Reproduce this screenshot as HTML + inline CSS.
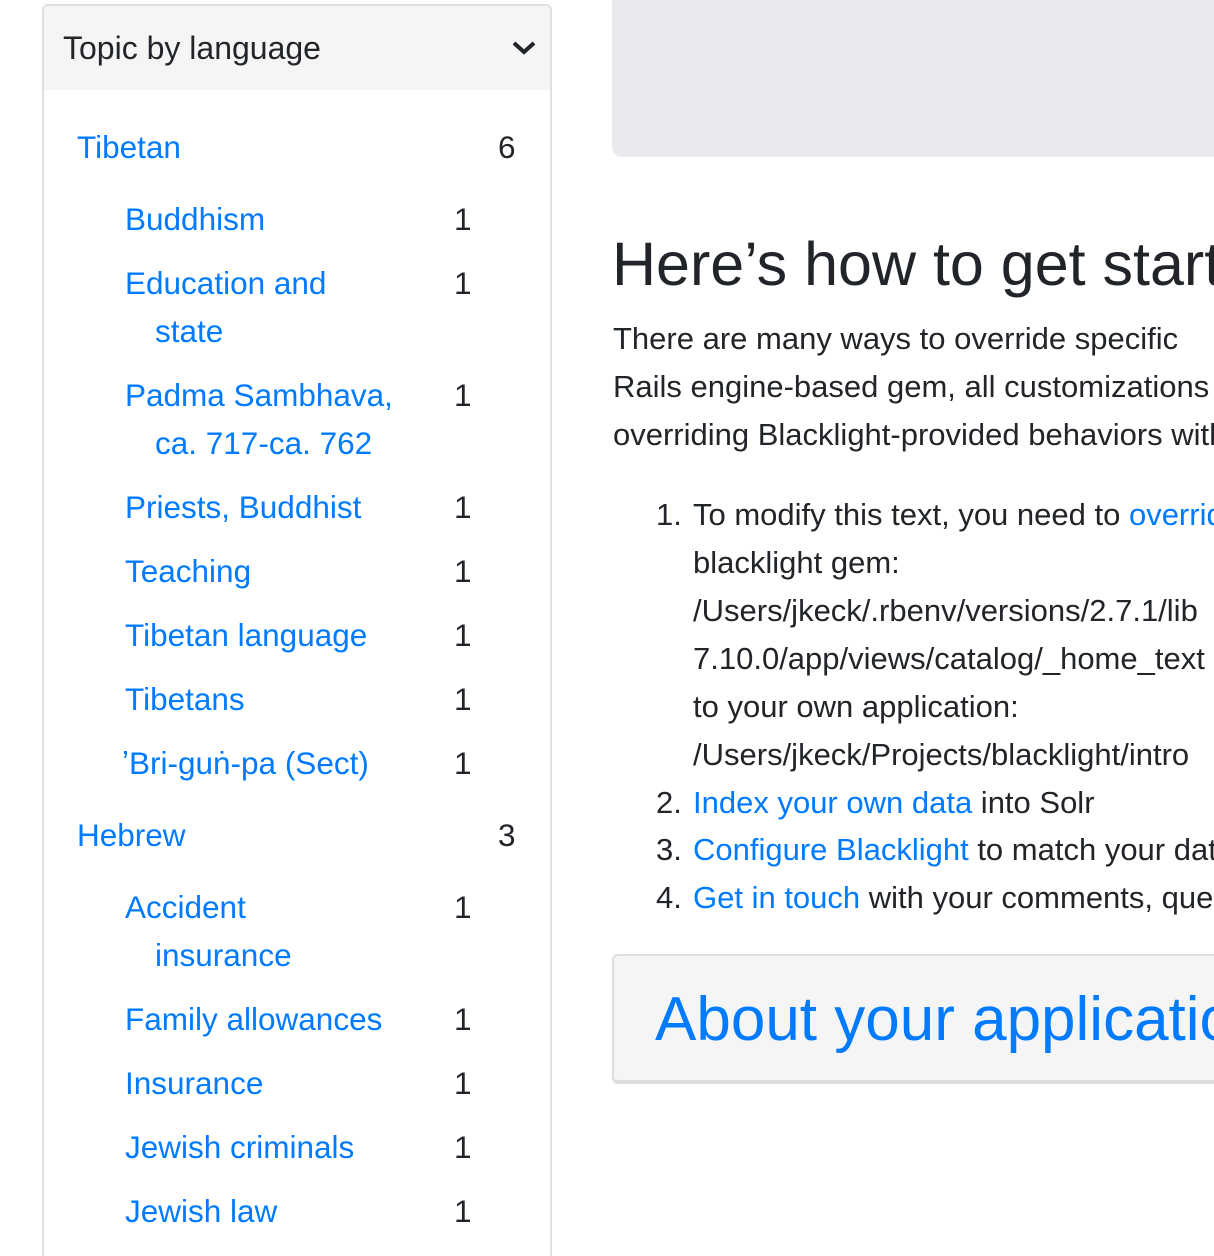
<!DOCTYPE html>
<html><head><meta charset="utf-8"><style>
html,body{margin:0;padding:0;width:1214px;height:1256px;overflow:hidden;background:#fff;font-family:"Liberation Sans",Arial,sans-serif;color:#212529}
#w{position:absolute;left:0;top:0;width:1214px;height:1256px;overflow:hidden}
.a{position:absolute;white-space:nowrap;line-height:48px}
.l{color:#007bff;font-size:31.5px}
.n{font-size:31.5px;color:#212529}
.t{font-size:31px}
</style></head><body><div id="w">
<div style="position:absolute;left:42px;top:4px;width:506px;height:1260px;border:2px solid #dfdfdf;border-bottom:none;border-radius:6px 6px 0 0"></div>
<div style="position:absolute;left:44px;top:6px;width:506px;height:84px;background:#f5f5f5;border-radius:4px 4px 0 0"></div>
<div class="a" style="left:63px;top:24px;font-size:32px;color:#212529">Topic by language</div>
<svg style="position:absolute;left:512px;top:40px" width="24" height="16" viewBox="0 0 24 16"><path d="M2 3 L12 12 L22 3" fill="none" stroke="#212529" stroke-width="4"/></svg>

<div class="a l" style="left:77px;top:123px">Tibetan</div><div class="a n" style="left:498px;top:123px">6</div>
<div class="a l" style="left:125px;top:195px">Buddhism</div><div class="a n" style="left:454px;top:195px">1</div>
<div class="a l" style="left:125px;top:259px">Education and</div><div class="a n" style="left:454px;top:259px">1</div>
<div class="a l" style="left:155px;top:307px">state</div>
<div class="a l" style="left:125px;top:371px">Padma Sambhava,</div><div class="a n" style="left:454px;top:371px">1</div>
<div class="a l" style="left:155px;top:419px">ca. 717-ca. 762</div>
<div class="a l" style="left:125px;top:483px">Priests, Buddhist</div><div class="a n" style="left:454px;top:483px">1</div>
<div class="a l" style="left:125px;top:547px">Teaching</div><div class="a n" style="left:454px;top:547px">1</div>
<div class="a l" style="left:125px;top:611px">Tibetan language</div><div class="a n" style="left:454px;top:611px">1</div>
<div class="a l" style="left:125px;top:675px">Tibetans</div><div class="a n" style="left:454px;top:675px">1</div>
<div class="a l" style="left:122px;top:739px">ʼBri-guṅ-pa (Sect)</div><div class="a n" style="left:454px;top:739px">1</div>
<div class="a l" style="left:77px;top:811px">Hebrew</div><div class="a n" style="left:498px;top:811px">3</div>
<div class="a l" style="left:125px;top:883px">Accident</div><div class="a n" style="left:454px;top:883px">1</div>
<div class="a l" style="left:155px;top:931px">insurance</div>
<div class="a l" style="left:125px;top:995px">Family allowances</div><div class="a n" style="left:454px;top:995px">1</div>
<div class="a l" style="left:125px;top:1059px">Insurance</div><div class="a n" style="left:454px;top:1059px">1</div>
<div class="a l" style="left:125px;top:1123px">Jewish criminals</div><div class="a n" style="left:454px;top:1123px">1</div>
<div class="a l" style="left:125px;top:1187px">Jewish law</div><div class="a n" style="left:454px;top:1187px">1</div>

<div style="position:absolute;left:612px;top:0;width:602px;height:157px;background:#e9eaee;border-radius:0 0 0 10px"></div>
<div class="a" style="left:612px;top:228px;font-size:61px;line-height:72px">Here’s how to get started</div>
<div class="a t" style="left:613px;top:315px">There are many ways to override specific</div>
<div class="a t" style="left:613px;top:363px">Rails engine-based gem, all customizations</div>
<div class="a t" style="left:613px;top:411px">overriding Blacklight-provided behaviors with</div>
<div class="a t" style="left:656px;top:491px">1.</div><div class="a t" style="left:693px;top:491px">To modify this text, you need to <span style="color:#007bff">override</span></div>
<div class="a t" style="left:693px;top:539px">blacklight gem:</div>
<div class="a t" style="left:693px;top:587px">/Users/jkeck/.rbenv/versions/2.7.1/lib</div>
<div class="a t" style="left:693px;top:635px">7.10.0/app/views/catalog/_home_text</div>
<div class="a t" style="left:693px;top:683px">to your own application:</div>
<div class="a t" style="left:693px;top:731px">/Users/jkeck/Projects/blacklight/intro</div>
<div class="a t" style="left:656px;top:779px">2.</div><div class="a t" style="left:693px;top:779px"><span style="color:#007bff">Index your own data</span> into Solr</div>
<div class="a t" style="left:656px;top:826px">3.</div><div class="a t" style="left:693px;top:826px"><span style="color:#007bff">Configure Blacklight</span> to match your data</div>
<div class="a t" style="left:656px;top:874px">4.</div><div class="a t" style="left:693px;top:874px"><span style="color:#007bff">Get in touch</span> with your comments, questions</div>

<div style="position:absolute;left:612px;top:954px;width:620px;height:124px;background:#f5f5f5;border:2px solid #dedede;border-bottom-width:4px;border-radius:6px"></div>
<div class="a" style="left:655px;top:984px;font-size:62px;line-height:72px;color:#007bff">About your application</div>
</div></body></html>
